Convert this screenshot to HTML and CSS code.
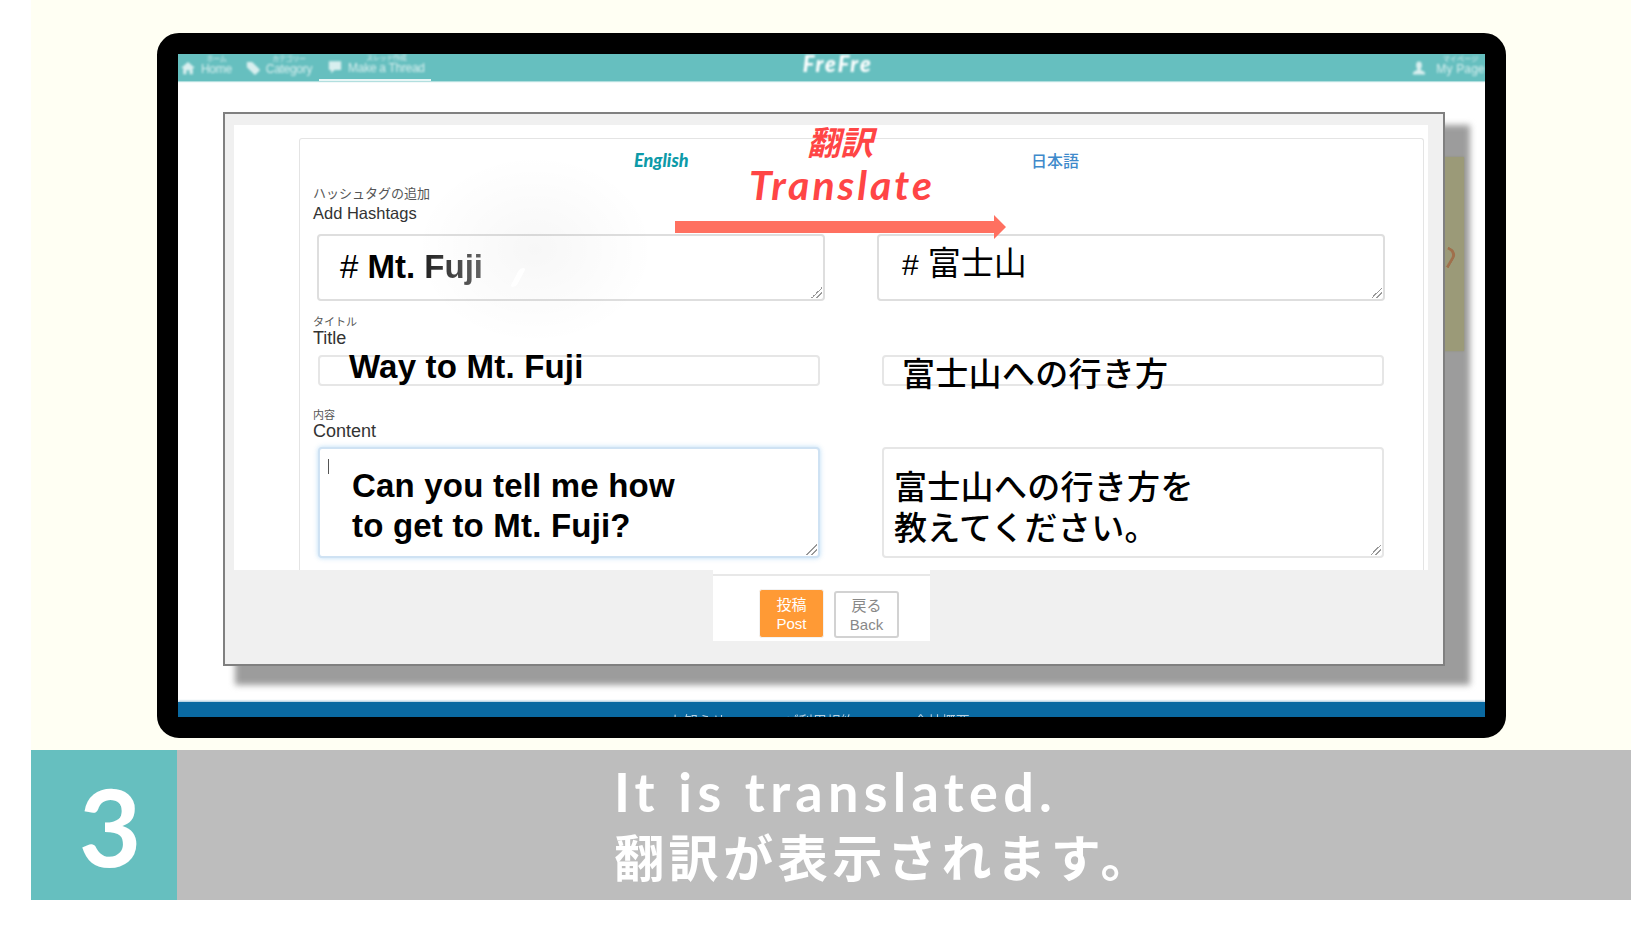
FILE: index.html
```html
<!DOCTYPE html>
<html lang="en">
<head>
  <meta charset="UTF-8">
  <meta name="viewport" content="width=device-width, initial-scale=1.0">
  <title>FreFre - It is translated</title>
  <link rel="stylesheet" href="styles.css">
</head>
<body>
  <div class="slide">
    <div class="stage">
      <div class="device">
        <div class="screen">
          <header class="site-header">
            <nav class="site-nav">
              <a class="nav-item">
                <svg class="nav-icon" viewBox="0 0 16 16"><path d="M8 1 L16 8 H13.5 V15 H9.8 V10.5 H6.2 V15 H2.5 V8 H0 Z"/></svg>
                <span class="nav-text"><small>ホーム</small>Home</span>
              </a>
              <a class="nav-item">
                <svg class="nav-icon" viewBox="0 0 16 16"><path d="M1 1 H7 L15.5 9.5 Q16 10.5 15.5 11 L11 15.5 Q10 16 9.5 15.5 L1 7 Z"/></svg>
                <span class="nav-text"><small>カテゴリー</small>Category</span>
              </a>
              <a class="nav-item nav-active">
                <svg class="nav-icon" viewBox="0 0 16 16"><path d="M1 1.5 H15 V11.5 H7.5 L3.5 15 V11.5 H1 Z"/></svg>
                <span class="nav-text"><small>スレッド作成</small>Make a Thread</span>
              </a>
            </nav>
            <div class="site-logo">FreFre</div>
            <a class="nav-item site-user">
              <svg class="nav-icon" viewBox="0 0 16 16"><path d="M8 0.5 C10.5 0.5 11.5 2.5 11.3 5 C11.1 7.5 10 9 9.6 9.8 C10 11 15 11.5 15 14.5 V15.5 H1 V14.5 C1 11.5 6 11 6.4 9.8 C6 9 4.9 7.5 4.7 5 C4.5 2.5 5.5 0.5 8 0.5 Z"/></svg>
              <span class="nav-text"><small>マイページ</small>My Page</span>
            </a>
          </header>

          <div class="modal">
            <div class="side-panel"><span class="side-mark"></span></div>
            <div class="modal-body">
              <div class="card">
                <div class="lang-row">
                  <span class="lang-en">English</span>
                  <span class="lang-ja">日本語</span>
                </div>

                <div class="group group-tags">
                  <div class="group-label">
                    <small>ハッシュタグの追加</small>
                    Add Hashtags
                  </div>
                  <div class="fields">
                    <div class="field grip"><div class="val"># <b>Mt. <span class="fade">Fuji</span></b></div></div>
                    <div class="field grip"><div class="val ja"><span class="hash">#</span> 富士山</div></div>
                  </div>
                </div>

                <div class="group group-title">
                  <div class="group-label">
                    <small>タイトル</small>
                    Title
                  </div>
                  <div class="fields">
                    <div class="field"><div class="val">Way to Mt. Fuji</div></div>
                    <div class="field"><div class="val ja">富士山への行き方</div></div>
                  </div>
                </div>

                <div class="group group-content">
                  <div class="group-label">
                    <small>内容</small>
                    Content
                  </div>
                  <div class="fields">
                    <div class="field grip focused"><span class="caret"></span><div class="val">Can you tell me how<br>to get to Mt. Fuji?</div></div>
                    <div class="field grip"><div class="val ja">富士山への行き方を<br>教えてください。</div></div>
                  </div>
                </div>
              </div>
            </div>

            <div class="actions">
              <div class="actions-inner">
                <button class="btn btn-post">投稿<br>Post</button>
                <button class="btn btn-back">戻る<br>Back</button>
              </div>
            </div>

            <!-- things pasted over the screenshot -->
            <div class="glare"></div>
            <div class="streak"></div>
            <div class="note">
              <div class="note-ja">翻訳</div>
              <div class="note-en">Translate</div>
            </div>
            <svg class="arrow" width="331" height="24" viewBox="0 0 331 24"><path d="M0 6 H319 V0 L331 12 L319 24 V18 H0 Z"/></svg>
          </div>

          <footer class="site-footer">
            <span>お知らせ</span>
            <span>ご利用規約</span>
            <span>会社概要</span>
          </footer>
        </div>
      </div>
    </div>

    <div class="band">
      <div class="band-num">3</div>
      <div class="band-text">
        <div class="band-en">It is translated.</div>
        <div class="band-ja">翻訳が表示されます。</div>
      </div>
    </div>
  </div>
</body>
</html>
```

FILE: styles.css
```css
body {
  margin: 0;
  background-color: #fff;
  font-family: "Liberation Sans", "Noto Sans CJK JP", sans-serif;
  overflow: hidden;
}

.slide {
  margin-left: 31px;
  height: 951px;
}

.stage {
  height: 750px;
  padding-top: 33px;
  box-sizing: border-box;
  background-color: #fffff3;
}

.device {
  margin-left: 126px;
  width: 1349px;
  height: 705px;
  box-sizing: border-box;
  border: 21px solid #000;
  border-radius: 22px;
  background-color: #000;
}

.screen {
  position: relative;
  z-index: 0;
  display: flex;
  flex-direction: column;
  height: 100%;
  overflow: hidden;
  background-color: #fff;
}

/* site header, blurred like the photo */
.site-header {
  display: flex;
  align-items: center;
  flex: none;
  height: 27px;
  background-color: #66bfbf;
  color: #fff;
  box-shadow: 0 1px 1px rgba(102, 191, 191, 0.5);
}

.site-nav {
  display: flex;
  height: 100%;
}

.nav-item {
  display: flex;
  align-items: center;
  height: 100%;
  padding: 0 6px 0 3px;
  gap: 6px;
  filter: blur(1px);
  box-sizing: border-box;
  opacity: 0.75;
}

.nav-icon {
  width: 14px;
  height: 14px;
  margin-top: 1px;
  fill: #fff;
}

.nav-text {
  font-size: 12px;
  letter-spacing: -0.3px;
  line-height: 12px;
  white-space: nowrap;
  margin-top: -5px;
}

.nav-text small {
  display: block;
  font-size: 7px;
  line-height: 8px;
  text-align: center;
}

.nav-item:nth-child(2) {
  margin-left: 5px;
}

.nav-active {
  margin-left: 1px;
  padding: 0 6px 0 9px;
  opacity: 1;
  filter: none;
  border-bottom: 2px solid #e8f6f6;
}

.nav-active .nav-icon,
.nav-active .nav-text {
  filter: blur(1px);
  opacity: 0.75;
}

.site-logo {
  margin: -8px 0 0 372px;
  font-family: "Lato", sans-serif;
  font-style: italic;
  font-weight: 900;
  font-size: 22px;
  line-height: 18px;
  letter-spacing: 2px;
  filter: blur(1px);
}

.site-user {
  margin-left: auto;
  padding: 0;
  gap: 10px;
}

.site-user .nav-text {
  letter-spacing: 0.2px;
}

/* modal */
.modal {
  position: relative;
  width: 1222px;
  height: 554px;
  margin: 31px 0 0 45px;
  box-sizing: border-box;
  padding: 11px 15px 0 9px;
  border: 2px solid #808080;
  background-color: #f0f0f0;
  flex: none;
}

.modal::before {
  content: "";
  position: absolute;
  z-index: -2;
  top: 11px;
  left: 10px;
  right: -27px;
  bottom: -21px;
  background-color: #9c9c9c;
  filter: blur(3px);
}

.side-panel {
  position: absolute;
  z-index: -1;
  top: 43px;
  left: 100%;
  width: 21px;
  height: 194px;
  background-color: #9b9a78;
  box-shadow: 0 0 2px #8f8f78;
}

.side-mark {
  display: block;
  width: 8px;
  height: 16px;
  margin-top: 91px;
  border-top: 3px solid #a0704c;
  border-right: 3px solid #a0704c;
  border-radius: 0 8px 0 0;
  transform: rotate(30deg);
}

.modal-body {
  height: 445px;
  padding: 13px 4px 0 65px;
  box-sizing: border-box;
  background-color: #fff;
}

.card {
  height: 432px;
  box-sizing: border-box;
  padding-left: 13px;
  border: 1px solid #e4e4e4;
  border-bottom: 0;
  border-radius: 3px 3px 0 0;
  color: #333;
}

.lang-row {
  display: grid;
  grid-template-columns: 397px auto;
  height: 45px;
  box-sizing: border-box;
  padding: 10px 0 0 321px;
  line-height: 22px;
}

.lang-en {
  font-family: "Lato", sans-serif;
  font-style: italic;
  font-weight: 900;
  font-size: 18px;
  color: #0d9aa8;
}

.lang-ja {
  margin-top: 2px;
  font-size: 16px;
  font-weight: 500;
  color: #3f8acb;
}

.group-label {
  font-size: 18px;
  line-height: 20px;
}

.group-label small {
  display: block;
  color: #555;
}

.group-tags .group-label small {
  font-size: 13px;
  line-height: 19px;
}

.group-tags .group-label {
  font-size: 16.5px;
}

.group-title {
  margin-top: 15px;
}

.group-title .group-label small,
.group-content .group-label small {
  font-size: 11px;
  line-height: 12px;
}

.group-content {
  margin-top: 23px;
}

.fields {
  display: flex;
  gap: 62px;
  margin-left: 5px;
}

.group-tags .fields {
  gap: 52px;
  margin: 11px 0 0 4px;
}

.group-title .fields {
  margin-top: 7px;
}

.group-content .fields {
  margin-top: 6px;
}

.field {
  position: relative;
  width: 502px;
  box-sizing: border-box;
  border: 2px solid #e6e6e6;
  border-radius: 4px;
  background-color: #fff;
  color: #000;
}

.group-tags .field {
  width: 508px;
  height: 67px;
  border-color: #dedede;
}

.group-title .field {
  height: 31px;
}

.group-content .field {
  height: 111px;
}

.focused {
  border-color: #cfe2f3;
  box-shadow: 0 0 5px rgba(102, 175, 233, 0.45);
}

.grip::after {
  content: "";
  position: absolute;
  right: 1px;
  bottom: 1px;
  width: 11px;
  height: 11px;
  background: linear-gradient(135deg, transparent 50%, #999 50%, #999 58%, transparent 58%, transparent 72%, #999 72%, #999 80%, transparent 80%);
}

.caret {
  position: absolute;
  top: 10px;
  left: 8px;
  width: 1px;
  height: 15px;
  background-color: #555;
}

.val {
  font-size: 33px;
  font-weight: 700;
  line-height: 40px;
  letter-spacing: 0.2px;
  white-space: nowrap;
}

.val.ja {
  font-size: 33px;
  font-weight: 500;
  letter-spacing: 0.3px;
}

.group-tags .val {
  font-weight: 400;
  padding: 11px 0 0 21px;
  letter-spacing: 0;
}

.group-tags .val b {
  font-weight: 700;
}

.group-tags .val.ja {
  padding: 8px 0 0 23px;
}

.hash {
  font-size: 30px;
  font-weight: 400;
}

.fade {
  color: #333;
  background: linear-gradient(90deg, #222, #666);
  -webkit-background-clip: text;
  background-clip: text;
  -webkit-text-fill-color: transparent;
}

.group-title .val {
  margin-top: -10px;
  padding-left: 29px;
}

.group-title .val.ja {
  margin-top: -2px;
  padding-left: 18px;
}

.group-content .val {
  padding: 17px 0 0 32px;
}

.group-content .val.ja {
  padding: 18px 0 0 10px;
  line-height: 41px;
}

/* buttons strip */
.actions {
  width: 217px;
  height: 71px;
  margin-left: 479px;
  padding-top: 4px;
  box-sizing: border-box;
  background-color: #fff;
}

.actions-inner {
  display: flex;
  align-items: flex-start;
  gap: 10px;
  padding: 13px 0 0 46px;
  border-top: 2px solid #e8e8e8;
}

.btn {
  box-sizing: border-box;
  padding: 0;
  border-radius: 3px;
  font-family: "Liberation Sans", "Noto Sans CJK JP", sans-serif;
  font-size: 15px;
  line-height: 19px;
}

.btn-post {
  width: 65px;
  height: 49px;
  border: 1px solid #f2f2f2;
  background-color: #ff9a35;
  color: #fff;
}

.btn-back {
  width: 65px;
  height: 47px;
  margin-top: 2px;
  border: 2px solid #d2d2d2;
  background-color: #fff;
  color: #888;
}

/* pasted annotations */
.glare {
  position: absolute;
  top: 40px;
  left: 190px;
  width: 240px;
  height: 190px;
  background: radial-gradient(closest-side, rgba(0, 0, 0, 0.03), rgba(0, 0, 0, 0));
  pointer-events: none;
}

.streak {
  position: absolute;
  top: 154px;
  left: 290px;
  width: 6px;
  height: 19px;
  border-radius: 3px;
  background-color: #fff;
  transform: skewX(-28deg);
}

.note {
  position: absolute;
  top: 12px;
  left: 524px;
  width: 200px;
  color: #ff4545;
  font-style: italic;
}

.note-ja {
  margin-left: 58px;
  font-size: 33px;
  font-weight: 700;
  line-height: 36px;
}

.note-en {
  margin-top: -2px;
  font-family: "Lato", sans-serif;
  font-size: 41px;
  font-weight: 700;
  line-height: 50px;
  letter-spacing: 3px;
}

.arrow {
  position: absolute;
  top: 101px;
  left: 450px;
  fill: #ff7060;
}

.site-footer {
  display: flex;
  gap: 59px;
  flex: none;
  height: 15px;
  margin-top: auto;
  padding-left: 492px;
  box-sizing: border-box;
  background-color: #0a69a1;
  box-shadow: 0 -1px 2px rgba(10, 105, 161, 0.4);
  color: #b5cfe0;
  font-size: 14px;
  line-height: 38px;
}

.site-footer span {
  filter: blur(0.7px);
}

/* caption band */
.band {
  display: flex;
  height: 150px;
  background-color: #bdbdbd;
  color: #fff;
}

.band-num {
  width: 146px;
  padding-left: 12px;
  box-sizing: border-box;
  background-color: #66bfbf;
  font-family: "Lato", sans-serif;
  font-size: 108px;
  font-weight: 700;
  line-height: 150px;
  text-align: center;
}

.band-text {
  padding: 10px 0 0 437px;
}

.band-en {
  font-family: "Lato", sans-serif;
  font-size: 54px;
  font-weight: 700;
  line-height: 64px;
  letter-spacing: 5.3px;
}

.band-ja {
  font-family: "Noto Sans CJK JP", sans-serif;
  font-size: 50px;
  font-weight: 700;
  line-height: 62px;
  letter-spacing: 4.6px;
}
```
